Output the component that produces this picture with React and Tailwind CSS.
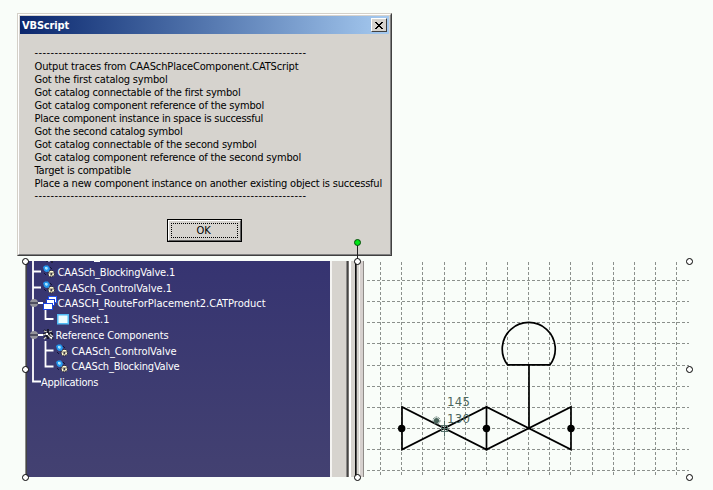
import { useLayoutEffect, useRef, useState } from 'react';

// Text that spreads its letters so that the line is `width` pixels long.
function Fit({ width, children, className = '' }) {
  const ref = useRef(null);
  const [gap, setGap] = useState(0);
  useLayoutEffect(() => {
    const natural = ref.current.getBoundingClientRect().width - gap * children.length;
    setGap((width - natural) / children.length);
  }, [width, children]);
  return (
    <span ref={ref} className={`inline-block whitespace-pre ${className}`} style={{ letterSpacing: `${gap}px` }}>
      {children}
    </span>
  );
}

const DASHES = '-'.repeat(68);

const TRACES = [
  [DASHES, 272],
  ['Output traces from CAASchPlaceComponent.CATScript', 264],
  ['Got the first catalog symbol', 133],
  ['Got catalog connectable of the first symbol', 206],
  ['Got catalog component reference of the symbol', 229.5],
  ['Place component instance in space is successful', 228.5],
  ['Got the second catalog symbol', 148],
  ['Got catalog connectable of the second symbol', 222],
  ['Got catalog component reference of the second symbol', 266.5],
  ['Target is compatible', 96.5],
  ['Place a new component instance on another existing object is successful', 347.5],
  [DASHES, 272],
];

function Dialog() {
  return (
    <section className="flex h-[243px] w-[375px] flex-col border border-t-[#d4d0c8] border-r-[#404040] border-b-[#404040] border-l-[#d4d0c8] bg-[#d6d3ce]">
      <div className="flex h-full flex-col border border-t-white border-r-[#808080] border-b-[#808080] border-l-white p-px">
        <header className="flex h-[18px] items-center justify-between bg-linear-to-r from-[#0c266d] to-[#a6caf0] pr-[2px] pl-[2px]">
          <Fit width={47} className="pt-px text-[11px] leading-[17px] font-bold text-white">VBScript</Fit>
          <button className="flex h-[14px] w-4 items-center justify-center border border-t-white border-r-[#404040] border-b-[#404040] border-l-white bg-[#d6d3ce]">
            <svg width="8" height="7" viewBox="0 0 8 7" shapeRendering="crispEdges">
              <path d="M0 0h2v1h1v1h2V1h1V0h2v1H7v1H6v1H5v1h1v1h1v1h1v1H6V6H5V5H3v1H2v1H0V6h1V5h1V4h1V3H2V2H1V1H0z" />
            </svg>
          </button>
        </header>
        <div className="flex flex-col pt-[13px] pl-[14.5px] text-[11px] leading-[13px] text-black">
          {TRACES.map(([text, width], i) => (
            <div key={i} className={text === DASHES ? 'h-[13px] leading-[12px]' : 'h-[13px]'}>
              <Fit width={width}>{text}</Fit>
            </div>
          ))}
        </div>
        <div className="flex pt-[16px] pl-[147px]">
          <button className="h-[23px] w-[75px] border border-black bg-[#d6d3ce]">
            <span className="flex h-full border border-t-white border-r-[#606060] border-b-[#606060] border-l-white p-[2px]">
              <span className="flex h-full w-full items-center justify-center border border-dotted border-black pr-[2px] text-[11px] leading-[13px]">
                <Fit width={14}>OK</Fit>
              </span>
            </span>
          </button>
        </div>
      </div>
    </section>
  );
}

function GearIcon() {
  return (
    <svg className="shrink-0" width="12" height="13" viewBox="0 0 12 13">
      <path d="M0 2l2-1.500 3 0 2 3-1 3-3 .5-2-1.500z" fill="#2397ee" />
      <path d="M2 2l2 0 1 1-1 2-2-1z" fill="#a7e4ff" />
      <circle cx="8.300" cy="8.700" r="3.200" fill="#b9b49b" stroke="#16142c" strokeDasharray="1.5 1" />
      <path d="M7 6h3v1H7zM6 9h1v2H6zM9 9h2v1H9z" fill="#fffbd5" />
      <circle cx="8.400" cy="9" r="1" fill="#302c42" />
      <path d="M7 2l2 2M1 8l2 2" stroke="#111638" />
    </svg>
  );
}

function ProductIcon() {
  return (
    <svg className="shrink-0" width="14" height="14" viewBox="0 0 14 14" shapeRendering="crispEdges">
      <path d="M5 0h9v7H5z" fill="#2252ef" />
      <path d="M6 1h7v5H6z" fill="#fff" />
      <path d="M3 3h9v7H3z" fill="#173bda" />
      <path d="M4 4h7v5H4z" fill="#fff" />
      <path d="M0 7h10v7H0z" fill="#1943e4" />
      <path d="M1 8h8v5H1z" fill="#fff" />
    </svg>
  );
}

function SheetIcon() {
  return (
    <svg className="shrink-0" width="12" height="11" viewBox="0 0 12 11">
      <rect x=".75" y=".75" width="10.5" height="9" fill="#eefcff" stroke="#51baf4" strokeWidth="1.5" />
    </svg>
  );
}

function ReferenceIcon() {
  return (
    <svg className="shrink-0" width="13" height="13" viewBox="0 0 13 13">
      <path d="M2 2l9 9M2 10l8-7M6 1v10M1 6h10" stroke="#17172b" strokeWidth="2" />
      <path d="M2 3l3 1M1 7l3-1M4 9l-2 2M7 4l3-1M8 6l3 3M6 7l4 4" stroke="#d2d0c2" strokeWidth="1.3" />
      <path d="M4 5h2v2H4zM8 9h2v1H8z" fill="#fff" />
    </svg>
  );
}

const TREE = [
  { icon: GearIcon, text: 'CAASch_BlockingValve.1', width: 117.5, pad: 'pl-[16px]', gap: 'w-[2.5px]' },
  { icon: GearIcon, text: 'CAASch_ControlValve.1', width: 114.5, pad: 'pl-[16px]', gap: 'w-[2.5px]' },
  { icon: ProductIcon, text: 'CAASCH_RouteForPlacement2.CATProduct', width: 208, pad: 'pl-[16px]', gap: 'w-[0.5px]' },
  { icon: SheetIcon, text: 'Sheet.1', width: 38, pad: 'pl-[29.5px]', gap: 'w-[3px]' },
  { icon: ReferenceIcon, text: 'Reference Components', width: 113, pad: 'pl-[15px]', gap: 'w-[0.5px]' },
  { icon: GearIcon, text: 'CAASch_ControlValve', width: 105, pad: 'pl-[29px]', gap: 'w-[3.5px]' },
  { icon: GearIcon, text: 'CAASch_BlockingValve', width: 108, pad: 'pl-[29px]', gap: 'w-[3.5px]' },
  { icon: null, text: 'Applications', width: 57, pad: 'pl-[14px]', gap: 'w-0' },
];

function TreePanel() {
  return (
    <section className="relative h-[216px] w-[303px] overflow-hidden bg-linear-to-b from-[#363471] to-[#434171]">
      {/* Connecting lines and fold handles under the labels */}
      <svg className="absolute top-0 left-0" width="303" height="216">
        <path d="M6 0v120.500h8M6 10.500h8M6 26.500h8M18.500 47v11h8M18.500 80v25.500h8M18.500 89.500h8" fill="none" stroke="#fff" strokeWidth="1.800" />
        <path d="M11 42h5M11 74h5" stroke="#fff" strokeWidth="2" />
        <circle cx="7" cy="42" r="4" fill="#93939a" />
        <circle cx="7" cy="74" r="4" fill="#93939a" />
        <path d="M3 42h8M3 74h8" stroke="#38384c" strokeWidth="1.300" />
        <path d="M21 0h2M67 .5h6" stroke="#fff" />
        <path d="M19 0h2M24 1h2" stroke="#111" />
      </svg>
      <ul className="relative flex flex-col pt-[3px] text-[11px] leading-[15.75px] text-white">
        {TREE.map(({ icon: Icon, text, width, pad, gap }) => (
          <li key={text} className={`flex h-[15.75px] items-center ${pad}`}>
            {Icon && <Icon />}
            <span className={`${gap} shrink-0`} />
            <Fit width={width} className="pt-[1.5px]">{text}</Fit>
          </li>
        ))}
      </ul>
    </section>
  );
}

function Splitter() {
  return (
    <div className="flex h-[216px] w-[34px]">
      <i className="w-[2px] bg-[#f4f3f1]" />
      <i className="w-[14px] bg-[#d6d3ce]" />
      <i className="w-px bg-[#8a8886]" />
      <i className="w-px bg-[#454545]" />
      <i className="w-px bg-[#777572]" />
      <i className="w-[2px] bg-white" />
      <i className="w-[4px] bg-[#d6d3ce]" />
      <i className="w-px bg-[#0c0c0c]" />
      <i className="w-px bg-[#555]" />
      <i className="w-[2px] bg-[#d6d3ce]" />
      <i className="w-px bg-[#f8f8f4]" />
      <i className="w-[3px] bg-[#d6d0ce]" />
      <i className="w-px bg-[#8f8b88]" />
    </div>
  );
}

const COLUMNS = [380.5, 401.5, 422.5, 444.5, 465.5, 486.5, 507.5, 528.5, 549.5, 570.5, 592.5, 613.5, 634.5, 655.5, 676.5];
const ROWS = [280.5, 301.5, 322.5, 343.5, 365.5, 386.5, 407.5, 428.5, 449.5, 470.5];

function Drawing() {
  return (
    <svg width="325" height="216" viewBox="364 261 325 216">
      <g stroke="#8b908c" strokeDasharray="3 2">
        {COLUMNS.map((x) => <path key={x} d={`M${x} 262V477`} />)}
        {ROWS.map((y) => <path key={y} d={`M367 ${y}H689`} />)}
      </g>
      <g fill="none" stroke="#000" strokeWidth="1.7">
        <path d="M402 407v42.500L486.500 407v42.500L402 407zM486.500 407v42.500L571 407v42.500L486.500 407z" />
        <path d="M529 364.800V428.500M507.500 364.800H550a26.500 26.500 0 1 0-42.500 0z" />
      </g>
      <circle cx="401.700" cy="428.500" r="3.700" />
      <circle cx="486.500" cy="428.500" r="3.700" />
      <circle cx="571" cy="428.500" r="3.700" />
      <g fill="none" stroke="#557069">
        <path d="M444.500 420.500v16M441 428.500h7" />
        <rect x="441.500" y="425.500" width="6" height="6" />
        <circle cx="436.500" cy="420.500" r="3.500" strokeDasharray="2 1" />
      </g>
      <circle cx="436.500" cy="420.500" r="2.600" fill="#48645a" />
      <g fill="#4c675e" fontSize="13">
        <text x="447" y="406" textLength="23">145</text>
        <text x="447" y="423" textLength="23">130</text>
      </g>
    </svg>
  );
}

const HANDLES = [[25.5, 261.5], [25.5, 369.5], [25.5, 477.5], [357.5, 261.5], [357.5, 477.5], [689.5, 261.5], [689.5, 369.5], [689.5, 477.5]];

export default function App() {
  return (
    <main className="relative h-[490px] w-[713px] overflow-hidden bg-[#f9fdf9] pt-[13px] font-['DejaVu_Sans_Condensed','DejaVu_Sans',sans-serif] [font-stretch:condensed]">
      <div className="flex pl-[17px]">
        <Dialog />
      </div>
      <div className="flex pt-[5px] pl-[25px]">
        <div className="h-[216px] w-[2px] border-x border-l-[#888] border-r-[#444]" />
        <TreePanel />
        <Splitter />
        <Drawing />
      </div>
      {/* Selection handles over the picture */}
      <svg className="absolute top-0 left-0" width="713" height="490">
        <path d="M357.500 245V259" stroke="#222" />
        {HANDLES.map(([x, y]) => (
          <circle key={`${x}-${y}`} cx={x} cy={y} r="3" fill="#fff" stroke="#000" />
        ))}
        <circle cx="357.500" cy="242.500" r="3" fill="#00e517" stroke="#064b09" />
      </svg>
    </main>
  );
}
